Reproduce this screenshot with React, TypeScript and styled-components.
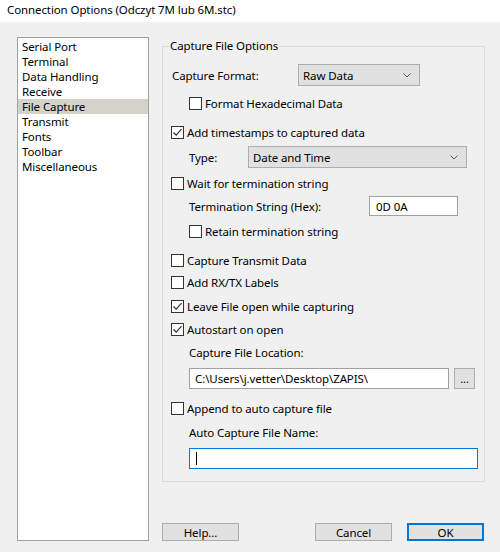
import React from "react";
import styled, { createGlobalStyle } from "styled-components";

const Global = createGlobalStyle`
  html, body { margin: 0; padding: 0; background: #f0f0f0; }
  body {
    font-family: "Noto Sans", "Open Sans", "Liberation Sans", sans-serif;
    font-size: 11.5px;
    letter-spacing: -0.1px;
    color: #000;
    width: 500px;
    height: 552px;
    overflow: hidden;
  }
  * { box-sizing: border-box; }
`;

const Window = styled.div`
  width: 500px;
  height: 552px;
  display: flex;
  flex-direction: column;
  background: #f0f0f0;
`;

const TitleBar = styled.div`
  height: 22px;
  background: #ffffff;
  padding: 2px 0 0 7px;
  line-height: 15px;
  white-space: nowrap;
`;

const Main = styled.div`
  display: flex;
  padding: 15px 0 0 17px;
`;

const ListBox = styled.div`
  width: 132px;
  height: 504px;
  background: #fff;
  border: 1px solid #a0a0a0;
  padding-top: 1px;
  display: flex;
  flex-direction: column;
`;

const ListItem = styled.div<{ $selected?: boolean }>`
  height: 15px;
  line-height: 15px;
  padding-left: 4px;
  white-space: nowrap;
  background: ${(p) => (p.$selected ? "#d5d1cb" : "transparent")};
`;

const RightCol = styled.div`
  margin-left: 13px;
  margin-top: 1px;
  width: 323px;
  display: flex;
  flex-direction: column;
`;

const Group = styled.fieldset`
  margin: 0;
  padding: 0 0 12px 8px;
  border: 1px solid #dcdcdc;
  display: flex;
  flex-direction: column;
  min-width: 0;
`;

const Legend = styled.legend`
  margin-left: -2px;
  padding: 0 1px;
  line-height: 16px;
  height: 16px;
`;

const Row = styled.div<{ $mt: number; $h: number; $indent?: number }>`
  display: flex;
  align-items: center;
  margin-top: ${(p) => p.$mt}px;
  height: ${(p) => p.$h}px;
  padding-left: ${(p) => p.$indent ?? 0}px;
  white-space: nowrap;
`;

const Label = styled.span<{ $w?: number }>`
  display: inline-block;
  line-height: 15px;
  width: ${(p) => (p.$w ? `${p.$w}px` : "auto")};
  flex: none;
`;

const Box = styled.span`
  width: 13px;
  height: 13px;
  border: 1px solid #333333;
  background: #fff;
  flex: none;
  display: flex;
  align-items: center;
  justify-content: center;
  margin-right: 3px;
`;

const Select = styled.div<{ $w: number }>`
  width: ${(p) => p.$w}px;
  height: 22px;
  background: #e1e1e1;
  border: 1px solid #adadad;
  display: flex;
  align-items: center;
  justify-content: space-between;
  padding: 0 8px 0 4px;
  line-height: 15px;
`;

const TextInput = styled.div<{ $w: number; $h: number; $focus?: boolean; $pl?: number }>`
  width: ${(p) => p.$w}px;
  height: ${(p) => p.$h}px;
  background: #fff;
  border: 1px solid ${(p) => (p.$focus ? "#0078d7" : "#a0a0a0")};
  display: flex;
  align-items: center;
  padding-left: ${(p) => p.$pl ?? 5}px;
  line-height: 15px;
`;

const Caret = styled.span`
  width: 1px;
  height: 13px;
  background: #000;
  margin-left: 1px;
`;

const SmallButton = styled.div`
  width: 21px;
  height: 21px;
  margin-left: 5px;
  background: #e1e1e1;
  border: 1px solid #adadad;
  display: flex;
  align-items: flex-end;
  justify-content: center;
  padding-bottom: 4px;
  line-height: 10px;
  font-size: 11px;
`;

const ButtonRow = styled.div`
  display: flex;
  margin-top: 41px;
`;

const Button = styled.div<{ $default?: boolean; $ml?: number }>`
  width: 77px;
  height: 18px;
  margin-left: ${(p) => p.$ml ?? 0}px;
  background: #e1e1e1;
  border: ${(p) => (p.$default ? "2px solid #0078d7" : "1px solid #adadad")};
  display: flex;
  align-items: center;
  justify-content: center;
  line-height: 15px;
`;

const Check = () => (
  <svg width="11" height="11" viewBox="0 0 11 11">
    <path d="M1.5 5.5 L4.2 8.2 L9.5 2.2" fill="none" stroke="#333" strokeWidth="1.2" />
  </svg>
);

const Chevron = () => (
  <svg width="8" height="5" viewBox="0 0 8 5">
    <path d="M0.5 0.5 L4 4 L7.5 0.5" fill="none" stroke="#555" strokeWidth="1" />
  </svg>
);

const CheckRow: React.FC<{ mt: number; indent?: number; checked?: boolean; label: string }> = ({
  mt,
  indent,
  checked,
  label,
}) => (
  <Row $mt={mt} $h={13} $indent={indent}>
    <Box>{checked && <Check />}</Box>
    <Label>{label}</Label>
  </Row>
);

const items = [
  "Serial Port",
  "Terminal",
  "Data Handling",
  "Receive",
  "File Capture",
  "Transmit",
  "Fonts",
  "Toolbar",
  "Miscellaneous",
];

export default function App() {
  return (
    <>
      <Global />
      <Window>
        <TitleBar>Connection Options (Odczyt 7M lub 6M.stc)</TitleBar>
        <Main>
          <ListBox>
            {items.map((it) => (
              <ListItem key={it} $selected={it === "File Capture"}>
                {it}
              </ListItem>
            ))}
          </ListBox>
          <RightCol>
            <Group>
              <Legend>Capture File Options</Legend>
              <Row $mt={10} $h={22} $indent={1}>
                <Label $w={126}>Capture Format:</Label>
                <Select $w={122}>
                  <span>Raw Data</span>
                  <Chevron />
                </Select>
              </Row>
              <CheckRow mt={11} indent={18} label="Format Hexadecimal Data" />
              <CheckRow mt={16} checked label="Add timestamps to captured data" />
              <Row $mt={7} $h={22} $indent={18}>
                <Label $w={59}>Type:</Label>
                <Select $w={219}>
                  <span>Date and Time</span>
                  <Chevron />
                </Select>
              </Row>
              <CheckRow mt={9} label="Wait for termination string" />
              <Row $mt={6} $h={20} $indent={18}>
                <Label $w={180}>Termination String (Hex):</Label>
                <TextInput $w={89} $h={20} $pl={6}>
                  0D 0A
                </TextInput>
              </Row>
              <CheckRow mt={9} indent={18} label="Retain termination string" />
              <CheckRow mt={16} label="Capture Transmit Data" />
              <CheckRow mt={9} label="Add RX/TX Labels" />
              <CheckRow mt={11} checked label="Leave File open while capturing" />
              <CheckRow mt={10} checked label="Autostart on open" />
              <Row $mt={9} $h={15} $indent={18}>
                <Label>Capture File Location:</Label>
              </Row>
              <Row $mt={8} $h={21} $indent={18}>
                <TextInput $w={260} $h={21}>
                  C:\Users\j.vetter\Desktop\ZAPIS\
                </TextInput>
                <SmallButton>...</SmallButton>
              </Row>
              <CheckRow mt={13} label="Append to auto capture file" />
              <Row $mt={10} $h={15} $indent={18}>
                <Label>Auto Capture File Name:</Label>
              </Row>
              <Row $mt={8} $h={21} $indent={18}>
                <TextInput $w={289} $h={21} $focus>
                  <Caret />
                </TextInput>
              </Row>
            </Group>
            <ButtonRow>
              <Button>Help...</Button>
              <Button $ml={76}>Cancel</Button>
              <Button $ml={15} $default>
                OK
              </Button>
            </ButtonRow>
          </RightCol>
        </Main>
      </Window>
    </>
  );
}
